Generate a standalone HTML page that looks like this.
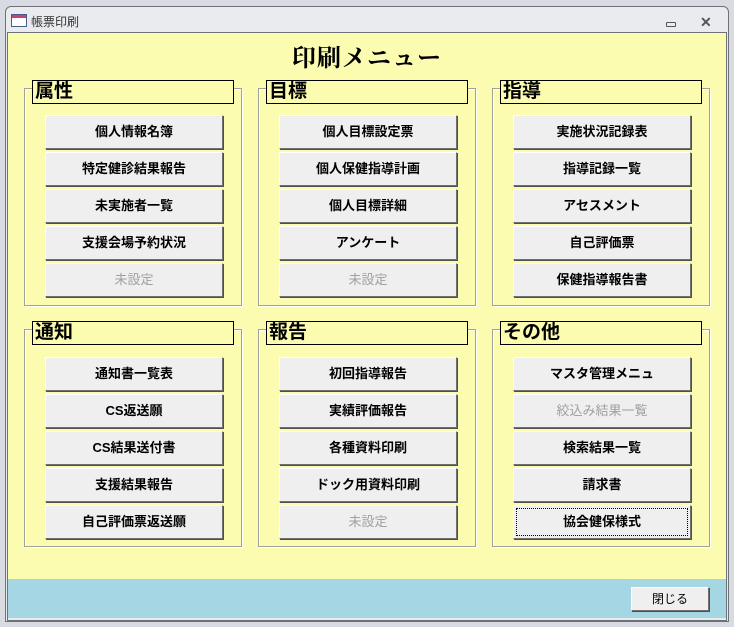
<!DOCTYPE html>
<html><head><meta charset="utf-8"><style>
*{margin:0;padding:0;box-sizing:border-box}
body{width:734px;height:627px;background:#d8dbe1;position:relative;overflow:hidden;font-family:"Liberation Sans","Noto Sans CJK JP",sans-serif}
.win{position:absolute;left:5px;top:6px;width:724px;height:616px;border:1px solid #6d7278;border-radius:6px 6px 0 0;background:#e9ebef}
.inner{position:absolute;left:7px;top:32px;width:720px;height:589px;border:1px solid #6d7278}
.yel{position:absolute;left:8px;top:33px;width:718px;height:546px;background:#fcfcb0}
.blue{position:absolute;left:8px;top:579px;width:718px;height:39px;background:#a5d6e3}
.ttl{position:absolute;left:31px;top:13px;font-size:12px;color:#333}
.ico{position:absolute;left:11px;top:14px;width:16px;height:13px;border:1px solid #4a5a8a;background:#fff}
.ico:before{content:"";position:absolute;left:0;top:0;right:0;height:3px;background:#c2457a}
.h1{position:absolute;left:0;width:734px;top:38px;text-align:center;font-size:24px;font-weight:bold;font-family:"Liberation Serif","Noto Serif CJK SC",serif;letter-spacing:1px}
.grp{position:absolute;width:218px;height:218px;border:1px solid #a0a0a0;box-shadow:inset 1px 1px 0 #fff,1px 1px 0 #fff}
.lab{position:absolute;width:202px;height:24px;border:1px solid #000;background:#fcfcb0;font-size:19px;font-weight:bold;line-height:22px;padding-left:2px}
.btn{position:absolute;width:178px;height:34px;background:#efefef;border:1px solid;border-color:#fff #707070 #707070 #fff;box-shadow:1px 1px 0 #505050;font-size:13px;font-weight:bold;text-align:center;line-height:31px}
.dis{color:#a0a0a0;font-weight:normal}
.foc:after{content:"";position:absolute;left:2px;top:2px;right:2px;bottom:2px;border:1px dotted #000}
.close{position:absolute;left:631px;top:587px;width:78px;height:24px;background:#efefef;border:1px solid;border-color:#fff #707070 #707070 #fff;box-shadow:1px 1px 0 #505050;font-size:12px;text-align:center;line-height:22px}
</style></head><body>
<div class="win"></div>
<div class="ico"></div><div class="ttl">帳票印刷</div>
<div style="position:absolute;left:666px;top:22px;width:10px;height:5px;border:1px solid #555;border-radius:1px"></div>
<div style="position:absolute;left:700px;top:14px;font-size:14px;color:#555;font-weight:bold">✕</div>
<div class="inner"></div>
<div class="yel"></div><div class="blue"></div>
<div class="h1">印刷メニュー</div>

<div class="grp" style="left:24px;top:88px"></div><div class="lab" style="left:32px;top:80px">属性</div>
<div class="grp" style="left:258px;top:88px"></div><div class="lab" style="left:266px;top:80px">目標</div>
<div class="grp" style="left:492px;top:88px"></div><div class="lab" style="left:500px;top:80px">指導</div>
<div class="grp" style="left:24px;top:329px"></div><div class="lab" style="left:32px;top:321px">通知</div>
<div class="grp" style="left:258px;top:329px"></div><div class="lab" style="left:266px;top:321px">報告</div>
<div class="grp" style="left:492px;top:329px"></div><div class="lab" style="left:500px;top:321px">その他</div>

<div class="btn" style="left:45px;top:115px">個人情報名簿</div>
<div class="btn" style="left:45px;top:152px">特定健診結果報告</div>
<div class="btn" style="left:45px;top:189px">未実施者一覧</div>
<div class="btn" style="left:45px;top:226px">支援会場予約状況</div>
<div class="btn dis" style="left:45px;top:263px">未設定</div>

<div class="btn" style="left:279px;top:115px">個人目標設定票</div>
<div class="btn" style="left:279px;top:152px">個人保健指導計画</div>
<div class="btn" style="left:279px;top:189px">個人目標詳細</div>
<div class="btn" style="left:279px;top:226px">アンケート</div>
<div class="btn dis" style="left:279px;top:263px">未設定</div>

<div class="btn" style="left:513px;top:115px">実施状況記録表</div>
<div class="btn" style="left:513px;top:152px">指導記録一覧</div>
<div class="btn" style="left:513px;top:189px">アセスメント</div>
<div class="btn" style="left:513px;top:226px">自己評価票</div>
<div class="btn" style="left:513px;top:263px">保健指導報告書</div>

<div class="btn" style="left:45px;top:357px">通知書一覧表</div>
<div class="btn" style="left:45px;top:394px">CS返送願</div>
<div class="btn" style="left:45px;top:431px">CS結果送付書</div>
<div class="btn" style="left:45px;top:468px">支援結果報告</div>
<div class="btn" style="left:45px;top:505px">自己評価票返送願</div>

<div class="btn" style="left:279px;top:357px">初回指導報告</div>
<div class="btn" style="left:279px;top:394px">実績評価報告</div>
<div class="btn" style="left:279px;top:431px">各種資料印刷</div>
<div class="btn" style="left:279px;top:468px">ドック用資料印刷</div>
<div class="btn dis" style="left:279px;top:505px">未設定</div>

<div class="btn" style="left:513px;top:357px">マスタ管理メニュ</div>
<div class="btn dis" style="left:513px;top:394px">絞込み結果一覧</div>
<div class="btn" style="left:513px;top:431px">検索結果一覧</div>
<div class="btn" style="left:513px;top:468px">請求書</div>
<div class="btn foc" style="left:513px;top:505px">協会健保様式</div>

<div class="close">閉じる</div>
</body></html>
